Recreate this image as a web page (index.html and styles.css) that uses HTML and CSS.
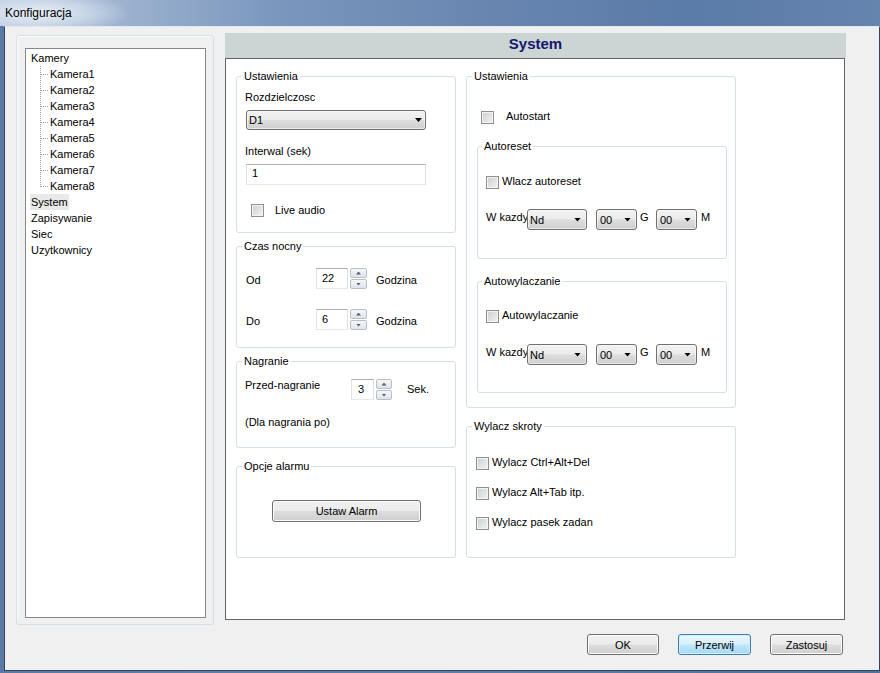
FILE: index.html
```html
<!DOCTYPE html>
<html lang="pl">
<head>
<meta charset="utf-8">
<title>Konfiguracja</title>
<link rel="stylesheet" href="styles.css">
</head>
<body>
<div class="window">
  <div class="titlebar"><span class="title">Konfiguracja</span></div>
  <div class="client">
    <div class="main">
      <div class="navgroup">
        <ul class="tree">
          <li class="node">Kamery</li>
          <li class="child"><span class="conn"></span>Kamera1</li>
          <li class="child"><span class="conn"></span>Kamera2</li>
          <li class="child"><span class="conn"></span>Kamera3</li>
          <li class="child"><span class="conn"></span>Kamera4</li>
          <li class="child"><span class="conn"></span>Kamera5</li>
          <li class="child"><span class="conn"></span>Kamera6</li>
          <li class="child"><span class="conn"></span>Kamera7</li>
          <li class="child last"><span class="conn"></span>Kamera8</li>
          <li class="node"><span class="sel">System</span></li>
          <li class="node">Zapisywanie</li>
          <li class="node">Siec</li>
          <li class="node">Uzytkownicy</li>
        </ul>
      </div>
      <div class="panel">
        <div class="panel-head">System</div>
        <div class="panel-body">
          <div class="col col-left">
            <fieldset class="grp">
              <legend>Ustawienia</legend>
              <div class="grp-in h-ust">
                <div class="lbl l-roz">Rozdzielczosc</div>
                <div class="combo c-d1"><span class="val">D1</span><span class="arrow"></span></div>
                <div class="lbl l-int">Interwal (sek)</div>
                <div class="tb t-int">1</div>
                <div class="cbrow r-live"><span class="cb"></span><span class="cbl wide">Live audio</span></div>
              </div>
            </fieldset>
            <fieldset class="grp g-czas">
              <legend>Czas nocny</legend>
              <div class="grp-in h-czas">
                <div class="spinrow r-od">
                  <span class="rl">Od</span>
                  <span class="tb t-num">22</span>
                  <span class="spin"><span class="up"></span><span class="dn"></span></span>
                  <span class="unit">Godzina</span>
                </div>
                <div class="spinrow r-do">
                  <span class="rl">Do</span>
                  <span class="tb t-num">6</span>
                  <span class="spin"><span class="up"></span><span class="dn"></span></span>
                  <span class="unit">Godzina</span>
                </div>
              </div>
            </fieldset>
            <fieldset class="grp g-nagr">
              <legend>Nagranie</legend>
              <div class="grp-in h-nagr">
                <div class="spinrow r-przed">
                  <span class="rl rl-top">Przed-nagranie</span>
                  <span class="tb t-num3">3</span>
                  <span class="spin s-small"><span class="up"></span><span class="dn"></span></span>
                  <span class="unit u-sek">Sek.</span>
                </div>
                <div class="lbl l-dla">(Dla nagrania po)</div>
              </div>
            </fieldset>
            <fieldset class="grp g-alarm">
              <legend>Opcje alarmu</legend>
              <div class="grp-in h-alarm">
                <button class="btn b-alarm" type="button">Ustaw Alarm</button>
              </div>
            </fieldset>
          </div>
          <div class="col col-right">
            <fieldset class="grp">
              <legend>Ustawienia</legend>
              <div class="grp-in h-ust2">
                <div class="cbrow r-auto"><span class="cb"></span><span class="cbl wide2">Autostart</span></div>
                <fieldset class="grp sub g-reset">
                  <legend>Autoreset</legend>
                  <div class="grp-in h-reset">
                    <div class="cbrow r-sub1"><span class="cb"></span><span class="cbl">Wlacz autoreset</span></div>
                    <div class="timerow r-t1">
                      <span class="tl">W kazdy</span>
                      <span class="combo c-day"><span class="val">Nd</span><span class="arrow"></span></span>
                      <span class="combo c-hm"><span class="val">00</span><span class="arrow"></span></span>
                      <span class="tl tl-g">G</span>
                      <span class="combo c-hm2"><span class="val">00</span><span class="arrow"></span></span>
                      <span class="tl tl-m">M</span>
                    </div>
                  </div>
                </fieldset>
                <fieldset class="grp sub g-off">
                  <legend>Autowylaczanie</legend>
                  <div class="grp-in h-off">
                    <div class="cbrow r-sub2"><span class="cb"></span><span class="cbl">Autowylaczanie</span></div>
                    <div class="timerow r-t2">
                      <span class="tl">W kazdy</span>
                      <span class="combo c-day"><span class="val">Nd</span><span class="arrow"></span></span>
                      <span class="combo c-hm"><span class="val">00</span><span class="arrow"></span></span>
                      <span class="tl tl-g">G</span>
                      <span class="combo c-hm2"><span class="val">00</span><span class="arrow"></span></span>
                      <span class="tl tl-m">M</span>
                    </div>
                  </div>
                </fieldset>
              </div>
            </fieldset>
            <fieldset class="grp g-skroty">
              <legend>Wylacz skroty</legend>
              <div class="grp-in h-skroty">
                <div class="cbrow r-k1"><span class="cb"></span><span class="cbl">Wylacz Ctrl+Alt+Del</span></div>
                <div class="cbrow r-k2"><span class="cb"></span><span class="cbl">Wylacz Alt+Tab itp.</span></div>
                <div class="cbrow r-k2"><span class="cb"></span><span class="cbl">Wylacz pasek zadan</span></div>
              </div>
            </fieldset>
          </div>
        </div>
      </div>
    </div>
    <div class="buttons">
      <button class="btn b-dlg" type="button">OK</button>
      <button class="btn b-dlg def" type="button">Przerwij</button>
      <button class="btn b-dlg" type="button">Zastosuj</button>
    </div>
  </div>
</div>
</body>
</html>
```

FILE: styles.css
```css
* { box-sizing: border-box; }
html, body { margin: 0; padding: 0; }
body {
  width: 880px;
  height: 673px;
  overflow: hidden;
  font-family: "Liberation Sans", Arial, sans-serif;
  font-size: 11px;
  color: #000;
}
.window {
  width: 880px;
  height: 673px;
  display: flex;
  flex-direction: column;
  background: linear-gradient(90deg, #5a79a5 0%, #5e7eaa 50%, #4f6f9c 100%);
}
.titlebar {
  height: 26px;
  flex: none;
  padding-left: 5px;
  background:
    radial-gradient(ellipse 90px 22px at 40px 13px, rgba(235,241,248,0.95) 0%, rgba(220,230,242,0.6) 55%, rgba(200,214,232,0) 100%),
    linear-gradient(90deg, #b7c8dc 0%, #9cb2cf 14%, #7a96bd 32%, #6886b0 55%, #5b7ba8 78%, #6584ae 100%);
}
.title {
  font-size: 12px;
  line-height: 26px;
  color: #000;
}
.client {
  flex: 1;
  margin: 0 0 2px 4px;
  border: 1px solid #33465f;
  border-top-color: #e1e8f1;
  background: #f0f0f0;
  padding: 6px 0 0 11px;
  display: flex;
  flex-direction: column;
}
.main {
  display: flex;
  align-items: flex-start;
  gap: 11px;
  height: 592px;
}
.navgroup {
  margin-top: 2px;
  width: 198px;
  height: 590px;
  border: 1px solid #d5dfe5;
  border-radius: 3px;
  box-shadow: inset 1px 1px 0 #fbfcfd;
  padding: 12px 0 0 8px;
}
.tree {
  list-style: none;
  margin: 0;
  padding: 1px 0 0 0;
  width: 181px;
  height: 570px;
  border: 1px solid #828790;
  background: #fff;
}
.tree li {
  height: 16px;
  line-height: 16px;
  display: flex;
  align-items: center;
  white-space: nowrap;
}
.node { padding-left: 5px; }
.sel {
  background: #e9e9e9;
  padding: 0 1px;
  margin-left: -1px;
  line-height: 16px;
}
.child { padding-left: 14px; }
.conn {
  width: 9px;
  height: 16px;
  margin-right: 1px;
  flex: none;
  background:
    repeating-linear-gradient(180deg, #a0a0a0 0 1px, transparent 1px 2px) 0 0 / 1px 16px no-repeat,
    repeating-linear-gradient(90deg, #a0a0a0 0 1px, transparent 1px 2px) 1px 8px / 8px 1px no-repeat;
}
.child.last .conn {
  background:
    repeating-linear-gradient(180deg, #a0a0a0 0 1px, transparent 1px 2px) 0 0 / 1px 9px no-repeat,
    repeating-linear-gradient(90deg, #a0a0a0 0 1px, transparent 1px 2px) 1px 8px / 8px 1px no-repeat;
}
.panel {
  width: 621px;
}
.panel-head {
  height: 25px;
  background: #cbd5d3;
  text-align: center;
  font-weight: bold;
  font-size: 15px;
  line-height: 21px;
  color: #16166e;
}
.panel-body {
  width: 620px;
  height: 562px;
  border: 1px solid #646464;
  background: #fff;
  padding: 11px 0 0 10px;
  display: flex;
  align-items: flex-start;
  gap: 10px;
}
.col { display: flex; flex-direction: column; }
.col-left { width: 220px; }
.col-right { width: 270px; }

.grp {
  margin: 0;
  padding: 0;
  min-width: 0;
  border: 1px solid #d5dfe5;
  border-radius: 3px;
}
.grp legend {
  padding: 0 2px;
  margin-left: 5px;
  line-height: 13px;
  font-size: 11px;
}
.grp.sub legend { margin-left: 4px; }
.g-czas, .g-nagr { margin-top: 7px; }
.g-alarm, .g-skroty { margin-top: 12px; }
.grp-in { display: flex; flex-direction: column; align-items: flex-start; }
.h-ust { height: 149px; }
.h-czas { height: 94px; }
.h-nagr { height: 79px; }
.h-alarm { height: 84px; }
.h-ust2 { height: 324px; }
.h-skroty { height: 124px; }
.h-reset { height: 105px; }
.h-off { height: 104px; }

.lbl { line-height: 13px; white-space: nowrap; }
.l-roz { margin: 8px 0 0 8px; }
.l-int { margin: 15px 0 0 8px; }
.l-dla { margin: 16px 0 0 8px; }

.combo {
  display: flex;
  align-items: center;
  height: 20px;
  border: 1px solid #707070;
  border-radius: 3px;
  background: linear-gradient(#f2f2f2 0%, #ebebeb 48%, #dddddd 52%, #cfcfcf 100%);
  box-shadow: inset 0 0 0 1px rgba(255,255,255,0.55);
  padding: 0 5px 0 2px;
  flex: none;
}
.combo .val { flex: 1; line-height: 16px; padding-top: 1px; }
.combo .arrow {
  width: 7px;
  height: 4px;
  background: #000;
  clip-path: polygon(0 0, 100% 0, 50% 100%);
  flex: none;
}
.c-d1 { width: 180px; margin: 6px 0 0 9px; padding-right: 3px; }
.c-d1 .val { padding-left: 0; padding-top: 0; }

.tb {
  display: block;
  height: 21px;
  border: 1px solid;
  border-color: #abadb3 #dbdfe6 #e3e9ef #e2e3ea;
  background: #fff;
  padding-left: 5px;
  line-height: 17px;
  flex: none;
}
.t-int { width: 180px; margin: 6px 0 0 9px; }

.cbrow { display: flex; align-items: flex-start; height: 13px; white-space: nowrap; }
.cb {
  width: 13px;
  height: 13px;
  flex: none;
  border: 1px solid #8e8f8f;
  background: linear-gradient(135deg, #c9cdd2 0%, #e3e4e6 60%, #f3f3f3 100%);
  box-shadow: inset 0 0 0 1px #f4f4f4;
}
.cbl { margin-left: 3px; line-height: 11px; }
.cbl.wide { margin-left: 11px; line-height: 13px; }
.cbl.wide2 { margin-left: 12px; }
.r-live { margin: 19px 0 0 14px; }
.r-auto { margin: 28px 0 0 14px; }
.r-sub1 { margin: 23px 0 0 8px; }
.r-sub2 { margin: 22px 0 0 8px; }
.r-k1 { margin: 24px 0 0 9px; }
.r-k2 { margin: 17px 0 0 9px; }

.g-reset { width: 250px; margin: 16px 0 0 10px; }
.g-off { width: 250px; margin: 16px 0 0 10px; }

.spinrow { display: flex; align-items: flex-start; height: 21px; }
.r-od { margin: 15px 0 0 9px; }
.r-do { margin: 20px 0 0 9px; }
.r-przed { margin: 11px 0 0 8px; }
.rl { width: 70px; line-height: 13px; flex: none; margin-top: 6px; }
.rl-top { width: 106px; margin-top: 0; }
.t-num { width: 32px; padding-left: 5px; line-height: 19px; }
.t-num3 { width: 23px; padding-left: 6px; line-height: 19px; }
.spin {
  display: flex;
  flex-direction: column;
  justify-content: space-between;
  width: 17px;
  height: 21px;
  margin-left: 2px;
  flex: none;
}
.s-small { width: 16px; }
.spin .up, .spin .dn {
  height: 10px;
  border: 1px solid #b7c0c9;
  border-radius: 2px;
  background: linear-gradient(#f7f7f7, #e0e4e8);
  display: flex;
  align-items: center;
  justify-content: center;
}
.spin .up::after, .spin .dn::after {
  content: "";
  width: 5px;
  height: 3px;
  background: #4b5f80;
}
.spin .up::after { clip-path: polygon(50% 0, 100% 100%, 0 100%); }
.spin .dn::after { clip-path: polygon(0 0, 100% 0, 50% 100%); }
.unit { margin-left: 9px; line-height: 13px; margin-top: 6px; }
.u-sek { margin-left: 15px; margin-top: 4px; }

.timerow { display: flex; align-items: flex-start; height: 21px; margin-left: 8px; white-space: nowrap; }
.r-t1 { margin-top: 20px; }
.r-t2 { margin-top: 21px; }
.timerow .combo { height: 21px; }
.timerow .combo .val { line-height: 17px; padding-top: 2px; }
.tl { line-height: 13px; margin-top: 2px; }
.timerow .tl:first-child { width: 41px; }
.c-day { width: 60px; }
.c-hm { width: 41px; margin-left: 9px; padding-left: 3px; }
.c-hm2 { width: 41px; padding-left: 3px; }
.tl-g { width: 19px; padding-left: 3px; }
.tl-m { margin-left: 4px; }

.btn {
  margin: 0;
  padding: 0;
  height: 21px;
  border: 1px solid #707070;
  border-radius: 3px;
  background: linear-gradient(#f2f2f2 0%, #ebebeb 48%, #dddddd 52%, #cfcfcf 100%);
  box-shadow: inset 0 0 0 1px #fbfbfb;
  font-family: "Liberation Sans", Arial, sans-serif;
  font-size: 11px;
  color: #000;
  display: flex;
  align-items: center;
  justify-content: center;
}
.btn.def {
  border-color: #3c7fb1;
  background: linear-gradient(#eaf6fd 0%, #d9f0fc 48%, #bee6fd 52%, #a7d9f5 100%);
  box-shadow: inset 0 0 0 1px #d4eefc;
}
.b-alarm { width: 149px; height: 22px; margin: 27px 0 0 35px; }
.buttons {
  display: flex;
  justify-content: flex-end;
  gap: 19px;
  margin-top: 9px;
  padding-right: 36px;
}
.b-dlg { width: 73px; }
.b-dlg:first-child { width: 72px; }
```
